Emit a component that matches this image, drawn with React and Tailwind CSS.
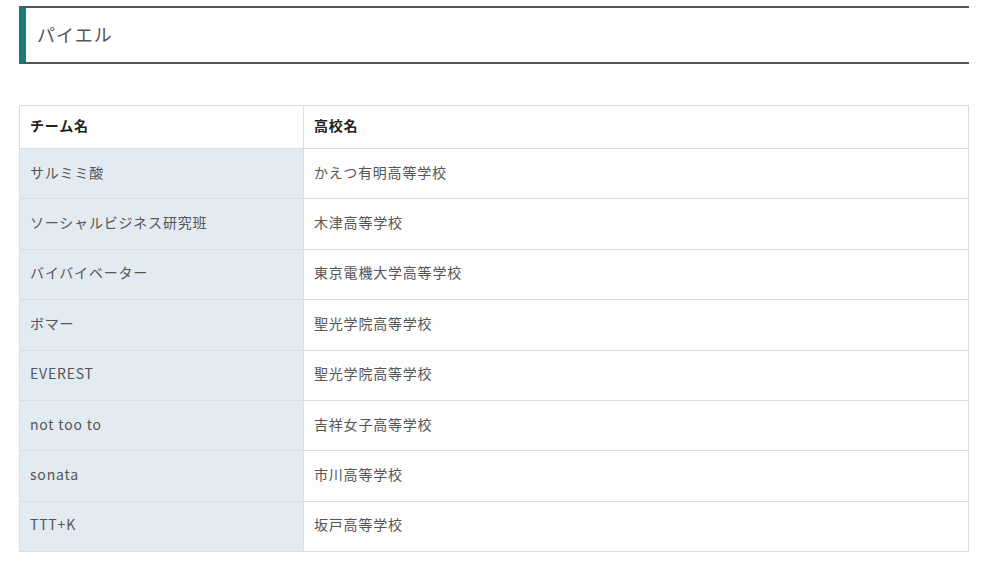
export default function App() {
  const rows = [
    ["サルミミ酸", "かえつ有明高等学校"],
    ["ソーシャルビジネス研究班", "木津高等学校"],
    ["バイバイベーター", "東京電機大学高等学校"],
    ["ボマー", "聖光学院高等学校"],
    ["EVEREST", "聖光学院高等学校"],
    ["not too to", "吉祥女子高等学校"],
    ["sonata", "市川高等学校"],
    ["TTT+K", "坂戸高等学校"],
  ];
  return (
    <div
      className="w-[1000px] h-[561px] bg-[#fefefe] overflow-hidden pt-[6px] px-[19px] pr-[31px]"
      style={{ fontFamily: '"Noto Sans CJK JP", "Noto Sans", sans-serif' }}
    >
      <div className="h-[58px] border-t-2 border-b-2 border-[#555] border-l-[7px] border-l-[#1b7c7c] bg-white flex items-center pl-[11px] pb-[2px] text-[18px] text-[#555] tracking-[1px]">
        パイエル
      </div>
      <table className="mt-[41px] w-full border-collapse text-[14px] text-[#555] tracking-[0.8px]">
        <thead>
          <tr className="h-[43px] bg-white">
            <th className="w-[284px] border border-[#ddd] text-left font-bold text-[#222] pl-[10px] pb-[3px]">チーム名</th>
            <th className="border border-[#ddd] text-left font-bold text-[#222] pl-[10px] pb-[3px]">高校名</th>
          </tr>
        </thead>
        <tbody>
          {rows.map((r, i) => (
            <tr key={i} className="h-[50.4px]">
              <td className="border border-[#ddd] bg-[#e2ebf2] pl-[10px] pb-[3px]">{r[0]}</td>
              <td className="border border-[#ddd] bg-[#fdfdfd] pl-[10px] pb-[3px]">{r[1]}</td>
            </tr>
          ))}
        </tbody>
      </table>
    </div>
  );
}
